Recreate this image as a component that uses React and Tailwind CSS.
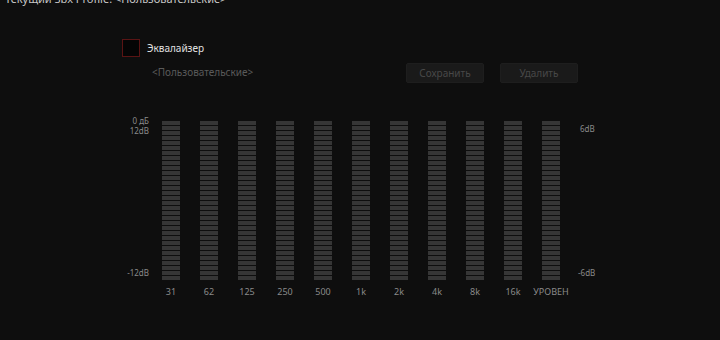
import React from 'react';

const bands = ['31', '62', '125', '250', '500', '1k', '2k', '4k', '8k', '16k', 'УРОВЕН'];
const segments = Array.from({ length: 32 });

function Bar({ label }) {
  return (
    <div className="flex w-[18px] flex-col items-center">
      <div className="flex w-[18px] flex-col gap-[1px]">
        {segments.map((_, i) => (
          <div key={i} className="h-[4px] w-full bg-[#363636]" />
        ))}
      </div>
      <div className="mt-[6px] whitespace-nowrap text-[9px] leading-[12px] text-[#8a8a8a]">{label}</div>
    </div>
  );
}

export default function App() {
  return (
    <div
      className="h-[340px] w-[720px] overflow-hidden bg-[#0e0e0e] text-[#d0d0d0]"
      style={{ fontFamily: '"Noto Sans", "Open Sans", sans-serif' }}
    >
      <div className="-mt-[8px] pl-[5px] text-[11px] leading-[14px] text-[#c8c8c8]">
        Текущий Sbx Profile: &lt;Пользовательские&gt;
      </div>

      <div className="mt-[33px] pl-[122px]">
        {/* Equalizer toggle */}
        <div className="flex items-center">
          <div className="h-[18px] w-[18px] border border-[#5a1414] bg-[#050505]" />
          <span className="ml-[7px] text-[10px] leading-[14px] text-[#e0e0e0]">Эквалайзер</span>
        </div>

        {/* Profile + actions */}
        <div className="mt-[6px] flex items-start">
          <div className="ml-[30px] mt-[2px] w-[254px] text-[10px] leading-[14px] text-[#5a5a5a]">
            &lt;Пользовательские&gt;
          </div>
          <div className="flex gap-[16px]">
            <button className="h-[20px] w-[78px] rounded-[2px] border border-[#1e1e1e] bg-[#1a1a1a] text-[10px] text-[#484848]">
              Сохранить
            </button>
            <button className="h-[20px] w-[78px] rounded-[2px] border border-[#1e1e1e] bg-[#1a1a1a] text-[10px] text-[#484848]">
              Удалить
            </button>
          </div>
        </div>
      </div>

      {/* EQ bars */}
      <div className="mt-[38px] flex items-start">
        <div className="flex h-[159px] w-[149px] flex-col items-end justify-between text-[8px] leading-[10px] text-[#8a8a8a]">
          <div className="-mt-[5px] text-right">
            <div>0 дБ</div>
            <div>12dB</div>
          </div>
          <div className="mb-[2px]">-12dB</div>
        </div>
        <div className="ml-[13px] flex gap-[20px]">
          {bands.map((b) => (
            <Bar key={b} label={b} />
          ))}
        </div>
        <div className="ml-[20px] flex h-[159px] flex-col justify-between text-[8px] leading-[10px] text-[#8a8a8a]">
          <div className="mt-[3px]">6dB</div>
          <div className="-ml-[2px] mb-[2px]">-6dB</div>
        </div>
      </div>
    </div>
  );
}
